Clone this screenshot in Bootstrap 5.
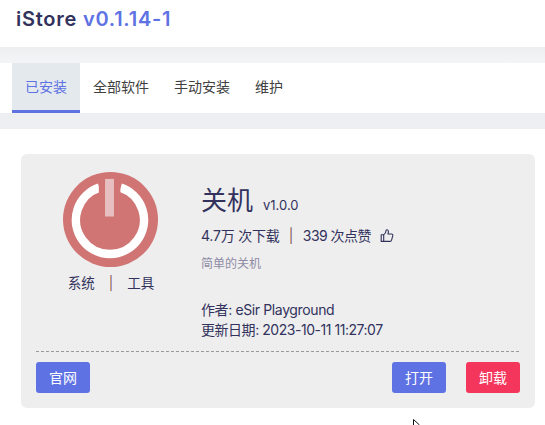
<!DOCTYPE html>
<html lang="zh-CN">
<head>
<meta charset="utf-8">
<meta name="viewport" content="width=device-width, initial-scale=1">
<title>iStore</title>
<link rel="stylesheet" href="https://cdn.jsdelivr.net/npm/bootstrap@5.3.0/dist/css/bootstrap.min.css">
<style>
body{font-family:Inter,"Noto Sans CJK SC",sans-serif;font-size:14px;line-height:20px;color:#32325d;height:425px;font-weight:400}
.topbar{height:47px;padding:7px 0 0 16px;font-size:20px;line-height:24px;font-weight:600;letter-spacing:.75px}
.topbar span{color:#5e72e4}
.gap-a{height:16px;background:linear-gradient(#eceef0,#f4f5f7)}
.gap-b{height:16px;background:linear-gradient(#edeef1,#eeeff2)}
.tabs{height:50px;padding-left:12px}
.tabs .nav-link{height:50px;padding:14px 13px 0 13px;color:#404040;border-radius:0}
.tabs .nav-link:not(.active){padding-right:12px}
.tabs .nav-link.active{color:#5e72e4;background:#e4e9ee;border-bottom:3px solid #5e72e4}
.app{margin:25px 10px 0 21px;height:254px;background:#eee;border:0;border-radius:6px;padding:0 15px;color:#32325d}
.app-main{height:197px}
.rule{height:1px;background:repeating-linear-gradient(90deg,#999 0 3px,#eee 3px 5px)}
.actions{padding-top:10px}
.action-pair{gap:20px}
.side{width:149px;margin-right:1px;padding-top:17.5px}
.side svg{width:95px;height:95px}
.tags{margin-top:6.5px;gap:14px;padding-left:1px}
.tags span{font-size:13.5px}
.info{padding:31px 0 0 15px}
.name{font-size:26px;line-height:32px}
.ver{font-size:13px;margin-left:10px}
.stats{margin-top:9px}
.dl{letter-spacing:-.2px}
.likes{letter-spacing:-.55px}
.stats .sep{margin:0 9.5px 0 9px}
.desc{font-size:12px;color:#8e8ca5;margin-top:8px}
.meta{margin-top:26px}
.author{letter-spacing:-.38px}
.updated{letter-spacing:-.46px}
.sep{color:#855b58}
.btn{width:54px;height:31px;padding:0;font-size:14px;line-height:31px;border:0;border-radius:3px;color:#fff;font-weight:400}
.btn-main{background:#5e72e4}
.btn-del{background:#f5365c}
.like-icon{margin-left:9px}
.pointer-tip{position:absolute;left:413px;top:419px}
</style>
<script src="https://cdn.jsdelivr.net/npm/bootstrap@5.3.0/dist/js/bootstrap.bundle.min.js"></script>
</head>
<body class="bg-white overflow-hidden position-relative">
<header class="topbar">iStore <span>v0.1.14-1</span></header>
<div class="gap-a"></div>
<nav class="nav tabs flex-nowrap">
<a class="nav-link active" href="#">已安装</a><a class="nav-link" href="#">全部软件</a><a class="nav-link" href="#">手动安装</a><a class="nav-link" href="#">维护</a>
</nav>
<div class="gap-b"></div>
<main class="card app">
<div class="app-main d-flex">
<div class="side d-flex flex-column align-items-center flex-shrink-0">
<svg viewBox="0 0 96 96"><circle cx="48" cy="48" r="48" fill="#d07574"/><path d="M36.7 15.8A34.4 34.4 0 1 0 58.2 15.8" fill="none" stroke="#fff" stroke-width="8.6"/><path d="M36.2 6H58V30H36.2z" fill="#d07574"/><path d="M42.5 7h9v38h-9z" fill="#e8bfc1"/></svg>
<div class="tags d-flex"><span>系统</span><span class="sep">|</span><span>工具</span></div>
</div>
<div class="info text-nowrap">
<div class="d-flex align-items-baseline"><span class="name">关机</span><span class="ver">v1.0.0</span></div>
<div class="stats d-flex align-items-center"><span class="dl">4.7万 次下载</span><span class="sep">|</span><span class="likes">339 次点赞</span>
<svg class="like-icon" width="14" height="14" viewBox="0 0 14 14" fill="none" stroke="#32325d" stroke-width="1.1" stroke-linejoin="round"><path d="M3.7 5.7H1.2v6.7h2.5zM3.7 5.7C5.4 4.8 6 3.2 6.1 1.4c.1-1 2.1-.8 2.3.9.1 1-.2 2-.5 2.7h3.7c1 0 1.4.8 1.2 1.6l-1.3 4.8c-.2.6-.6 1-1.2 1H3.7"/></svg></div>
<div class="desc">简单的关机</div>
<div class="meta"><div class="author">作者: eSir Playground</div><div class="updated">更新日期: 2023-10-11 11:27:07</div></div>
</div>
</div>
<div class="rule"></div>
<div class="actions d-flex justify-content-between">
<button class="btn btn-main">官网</button>
<div class="action-pair d-flex"><button class="btn btn-main">打开</button><button class="btn btn-del">卸载</button></div>
</div>
</main>
<svg class="pointer-tip" width="9" height="6" viewBox="0 0 9 6"><path d="M.5 6V.5L6.5 6" fill="#fff" stroke="#111" stroke-width="1"/></svg>
</body>
</html>
